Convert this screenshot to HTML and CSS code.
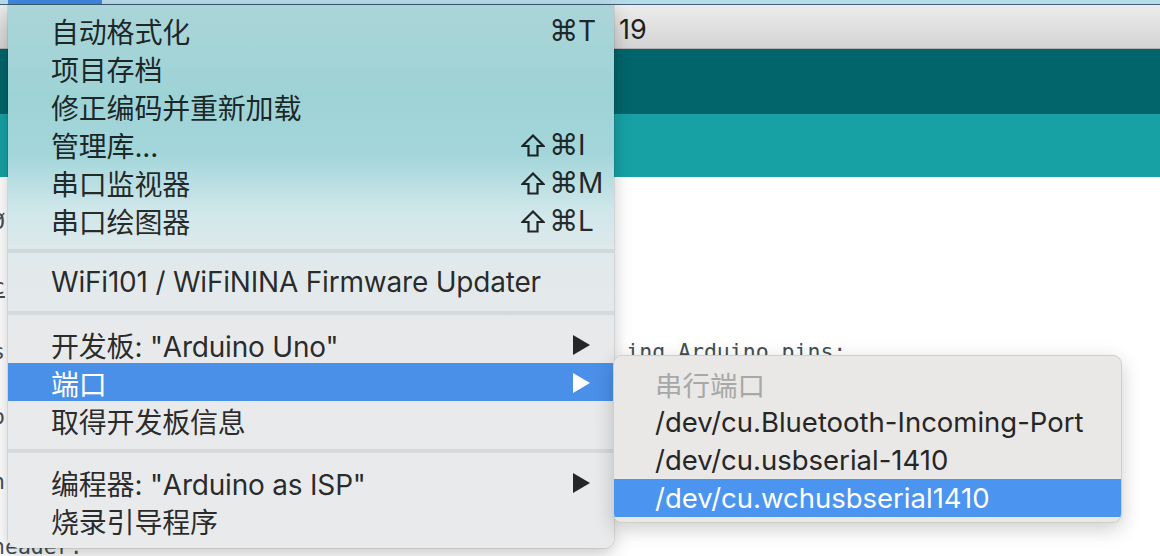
FILE: index.html
```
<!DOCTYPE html>
<html>
<head>
<meta charset="utf-8">
<link rel="stylesheet" href="styles.css">
</head>
<body>
<div class="window">
  <div class="menubar"><span class="menubar-active"></span></div>
  <div class="titlebar"><span class="title">19</span></div>
  <div class="toolbar"></div>
  <div class="tabs"></div>
  <pre class="editor"><span class="ln">Ø                                                                       </span>
<span class="ln"> </span>
<span class="ln"><u>c</u>                                                                   </span>
<span class="ln"> </span>
<span class="ln">s                                                ing Arduino pins:</span>
<span class="ln"> </span>
<span class="ln">o</span>
<span class="ln"> </span>
<span class="ln">n</span>
<span class="ln"> </span>
<span class="ln">header:</span></pre>
</div>

<ul class="menu">
  <li class="item"><span class="label">自动格式化</span><span class="cmd">⌘</span><span class="key">T</span></li>
  <li class="item"><span class="label">项目存档</span></li>
  <li class="item"><span class="label">修正编码并重新加载</span></li>
  <li class="item"><span class="label">管理库...</span><svg class="shift" viewBox="0 0 24 23"><path d="M12 1.5 L22.5 12 H16.5 V21.5 H7.5 V12 H1.5 Z"/></svg><span class="cmd">⌘</span><span class="key">I</span></li>
  <li class="item"><span class="label">串口监视器</span><svg class="shift" viewBox="0 0 24 23"><path d="M12 1.5 L22.5 12 H16.5 V21.5 H7.5 V12 H1.5 Z"/></svg><span class="cmd">⌘</span><span class="key">M</span></li>
  <li class="item"><span class="label">串口绘图器</span><svg class="shift" viewBox="0 0 24 23"><path d="M12 1.5 L22.5 12 H16.5 V21.5 H7.5 V12 H1.5 Z"/></svg><span class="cmd">⌘</span><span class="key">L</span></li>
  <li class="sep"></li>
  <li class="item"><span class="label">WiFi101 / WiFiNINA Firmware Updater</span></li>
  <li class="sep"></li>
  <li class="item"><span class="label">开发板: "Arduino Uno"</span><svg class="arrow" viewBox="0 0 17 20"><polygon points="0,0 17,10 0,20"/></svg></li>
  <li class="item active"><span class="label">端口</span><svg class="arrow" viewBox="0 0 17 20"><polygon points="0,0 17,10 0,20"/></svg>
    <ul class="submenu">
      <li class="sub disabled">串行端口</li>
      <li class="sub">/dev/cu.Bluetooth-Incoming-Port</li>
      <li class="sub">/dev/cu.usbserial-1410</li>
      <li class="sub active">/dev/cu.wchusbserial1410</li>
    </ul>
  </li>
  <li class="item"><span class="label">取得开发板信息</span></li>
  <li class="sep"></li>
  <li class="item"><span class="label">编程器: "Arduino as ISP"</span><svg class="arrow" viewBox="0 0 17 20"><polygon points="0,0 17,10 0,20"/></svg></li>
  <li class="item"><span class="label">烧录引导程序</span></li>
</ul>
</body>
</html>
```
FILE: styles.css
```
html, body {
  margin: 0;
  padding: 0;
  width: 1160px;
  height: 556px;
  overflow: hidden;
  background: #ffffff;
}

body {
  position: relative;
  font-family: "Inter", "Noto Sans CJK SC", sans-serif;
}

.window {
  display: flex;
  flex-direction: column;
  height: 556px;
}

.menubar {
  height: 4px;
  background: #b8dbea;
  border-bottom: 1px solid #44617a;
}

.menubar-active {
  display: block;
  width: 94px;
  height: 4px;
  margin-left: 8px;
  background: #3f86e0;
}

.titlebar {
  height: 43px;
  background: linear-gradient(#ececec, #d4d4d4);
  border-bottom: 1px solid #b2b2b2;
  display: flex;
  align-items: center;
  padding-left: 619px;
}

.title {
  font-family: "Inter", sans-serif;
  font-size: 27px;
  color: #1e1e1e;
  padding-top: 6px;
}

.toolbar {
  height: 65px;
  background: #02656b;
}

.tabs {
  height: 63px;
  background: #17a1a5;
}

.editor {
  flex: 1;
  margin: 0;
  padding: 29px 0 0 0;
  margin-left: -8px;
  font-family: "DejaVu Sans Mono", monospace;
  font-size: 21.5px;
  line-height: 32.5px;
  color: #434f54;
  white-space: pre;
  overflow: hidden;
}

.menu {
  position: absolute;
  left: 8px;
  top: 5px;
  width: 606px;
  height: 543px;
  box-sizing: border-box;
  margin: 0;
  padding: 6px 0 9px 0;
  list-style: none;
  border-radius: 0 0 10px 10px;
  background: linear-gradient(#abd5d8 0px, #9ed3d6 90px, #a3d6da 150px, #cfe7ea 205px, #e0e9eb 250px, #e7e9eb 320px, #e8eaeb 100%);
  box-shadow: 0 6px 18px rgba(0,0,0,0.22), 0 0 0 1px rgba(0,0,0,0.08);
  font-size: 28px;
  letter-spacing: -0.2px;
  color: rgba(0, 0, 0, 0.84);
}

.item {
  position: relative;
  height: 38px;
  display: grid;
  grid-template-columns: 1fr 28px 28px 22px;
  align-items: center;
  padding: 0 14px 0 43px;
  white-space: nowrap;
}

.label {
  grid-column: 1;
}

.shift {
  grid-column: 2;
  width: 24px;
  height: 23px;
  fill: none;
  stroke: rgba(0, 0, 0, 0.84);
  stroke-width: 2.2;
  stroke-linejoin: miter;
  margin-left: -1px;
}

.cmd {
  grid-column: 3;
  font-family: "DejaVu Sans", sans-serif;
  font-size: 29px;
  line-height: 1;
  margin-left: -1px;
}

.key {
  grid-column: 4;
}

.arrow {
  grid-column: 2 / 5;
  justify-self: end;
  width: 17px;
  height: 20px;
  margin-right: 10px;
  fill: #262626;
}

.item.active {
  background: #4a90e9;
  color: #ffffff;
}

.item.active .arrow {
  fill: #ffffff;
}

.sep {
  height: 24px;
  display: flex;
  align-items: center;
}

.sep::before {
  content: "";
  display: block;
  width: 100%;
  height: 4px;
  background: rgba(40, 70, 80, 0.09);
}

.submenu {
  position: absolute;
  left: 605px;
  top: -8px;
  width: 509px;
  height: 168px;
  box-sizing: border-box;
  margin: 0;
  padding: 9px 0 7px 0;
  list-style: none;
  background: #e9e8e6;
  border: 1px solid #cfcfcd;
  border-radius: 9px;
  box-shadow: 0 6px 20px rgba(0,0,0,0.2);
  overflow: hidden;
  color: #262626;
  font-size: 27.5px;
  letter-spacing: 0;
}

.sub {
  height: 38px;
  display: flex;
  align-items: center;
  padding-left: 41px;
  white-space: nowrap;
}

.sub.disabled {
  color: #a8a8a8;
}

.sub.active {
  background: #4b94ef;
  color: #ffffff;
}
```
